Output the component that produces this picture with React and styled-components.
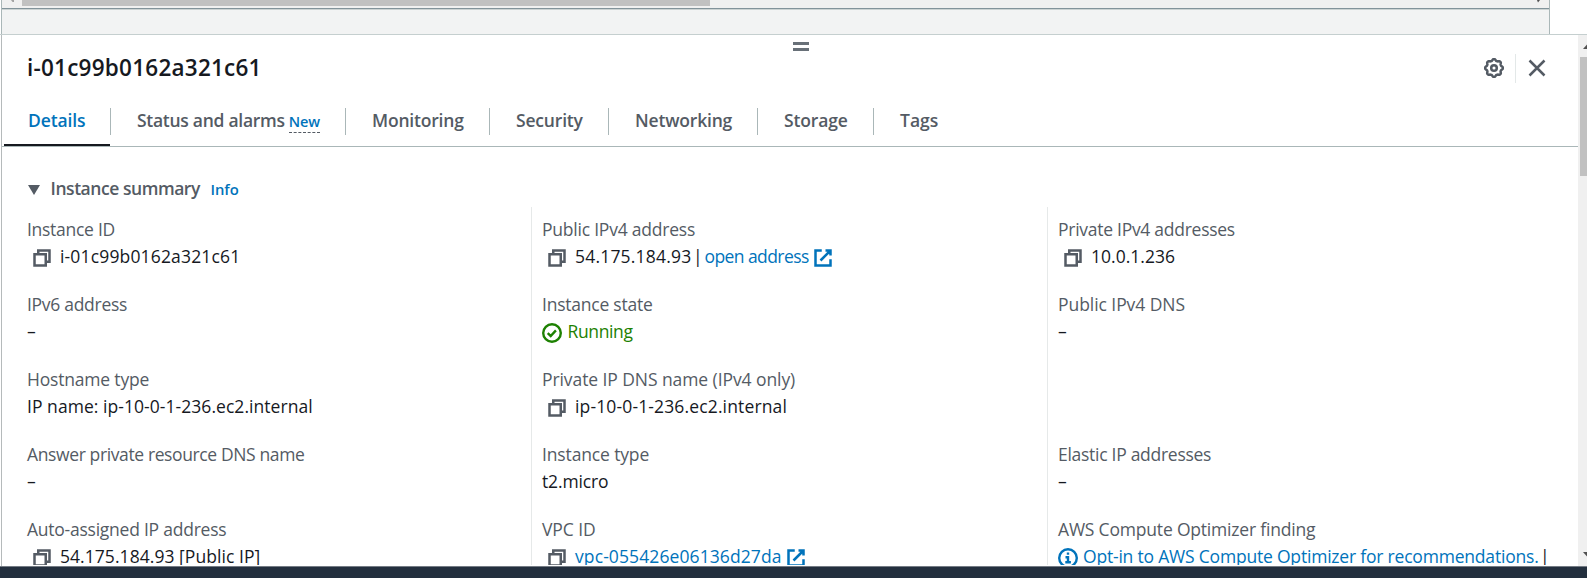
import React from 'react';
import styled, { createGlobalStyle } from 'styled-components';

const GlobalStyle = createGlobalStyle`
  * { box-sizing: border-box; }
  body {
    margin: 0;
    overflow: hidden;
    background: #fff;
    color: #16191f;
    font-family: "Open Sans", "Noto Sans", sans-serif;
    font-size: 17.5px;
  }
`;

const Page = styled.div`
  display: flex;
  flex-direction: column;
  width: 100%;
  height: 578px;
  overflow: hidden;
`;

const TableTail = styled.div`
  flex: none;
  width: 1550px;
  height: 34px;
  padding-left: 1px;
`;

const TableFrame = styled.div`
  height: 34px;
  background: #f2f3f3;
  border: solid #aab7b8;
  border-width: 0 1px;
`;

const HorizontalScrollbar = styled.div`
  display: flex;
  height: 10px;
  background: #f0f0f0;
  border-bottom: 1px solid #ccd3d3;
  box-shadow: inset 0 -1px 0 #82939a;
`;

const HorizontalThumb = styled.div`
  width: 688px;
  height: 6px;
  margin-left: 7px;
  background: #c1c1c1;
`;

const ScrollTip = styled.svg`
  flex: none;
  display: block;
  width: 4px;
  height: 3px;
  margin: ${(p) => (p.$end ? '0 8px 0 auto' : '0 0 0 9px')};
`;

const SplitPanel = styled.section`
  display: flex;
  flex: none;
  height: 532px;
  padding-left: 1px;
  border-top: 1px solid #c5cfcf;
`;

const PanelMain = styled.div`
  display: flex;
  flex-direction: column;
  width: 1577px;
  height: 531px;
  border-left: 1px solid #b5babb;
  overflow: hidden;
`;

const Handle = styled.div`
  display: flex;
  flex-direction: column;
  justify-content: space-between;
  width: 16px;
  height: 9px;
  margin: 7px 0 0 791px;

  &::before,
  &::after {
    content: "";
    height: 3px;
    background: #687078;
  }
`;

const PanelHeader = styled.header`
  display: flex;
  align-items: center;
  height: 34px;
  padding: 0 31px 0 25px;
`;

const Title = styled.h2`
  flex: 1;
  margin: 0;
  font-size: 22.5px;
  font-weight: 600;
  line-height: 32px;
  letter-spacing: 0.24px;
`;

const HeaderButton = styled.button`
  display: flex;
  padding: 0;
  border: 0;
  background: none;
  color: #545b64;
`;

const HeaderDivider = styled.span`
  width: 1px;
  height: 29px;
  margin: 0 11px;
  background: #e3e8e8;
`;

const TabList = styled.nav`
  display: flex;
  flex: none;
  height: 62px;
  padding: 23px 0 0 2px;
  border-bottom: 1px solid #aab7b8;
`;

const Tab = styled.a`
  position: relative;
  display: flex;
  align-items: baseline;
  width: ${(p) => p.$width}px;
  height: 27px;
  padding-left: ${(p) => (p.$active ? 24 : 26)}px;
  border-right: ${(p) => (p.$last ? 'none' : '1px solid #aab7b8')};
  color: ${(p) => (p.$active ? '#0073bb' : '#545b64')};
  font-weight: 600;
  line-height: 25px;
  white-space: nowrap;

  &::after {
    content: "";
    position: absolute;
    left: 0;
    right: 0;
    bottom: -11px;
    height: 2px;
    background: ${(p) => (p.$active ? '#16191f' : 'transparent')};
  }
`;

const NewBadge = styled.span`
  margin-left: 4px;
  border-bottom: 1px dashed #545b64;
  color: #0073bb;
  font-size: 14.5px;
  line-height: 20px;
  letter-spacing: -0.1px;
`;

const SectionHeader = styled.div`
  display: flex;
  align-items: baseline;
  height: 60px;
  padding: 28px 0 0 26px;
  color: #545b64;
  font-weight: 600;
  line-height: 27px;
`;

const Caret = styled.svg`
  width: 12px;
  height: 10px;
  margin-right: 10.5px;
`;

const InfoLink = styled.a`
  margin-left: 10.5px;
  color: #0073bb;
  font-size: 14.8px;
`;

const SummaryGrid = styled.div`
  display: grid;
  grid-template-columns: 504px 516px 520px;
  height: 358px;
  padding-left: 25px;
  overflow: hidden;
`;

const Column = styled.div`
  display: grid;
  grid-auto-rows: 54px;
  row-gap: 21px;
  height: 380px;
  padding: 9px 0 0 ${(p) => (p.$first ? 0 : 10)}px;
  border-left: ${(p) => (p.$first ? 'none' : '1px solid #e6e9e9')};
`;

const Field = styled.div`
  line-height: 27px;
  white-space: nowrap;
`;

const Label = styled.div`
  height: 27px;
  color: #545b64;
`;

const Value = styled.div`
  display: flex;
  height: 27px;
`;

const Text = styled.span`
  letter-spacing: ${(p) => p.$tracking || 0}px;
`;

const Link = styled.a`
  color: #0073bb;
`;

const Status = styled.span`
  color: #1d8102;
`;

const Pipe = styled.span`
  width: 13px;
  padding-left: 1.5px;
`;

const Icon = styled.svg`
  flex: none;
  display: block;
  width: 20px;
  height: 20px;
  margin: ${(p) => p.$margin || '0'};
  fill: none;
  stroke: currentColor;
  stroke-width: ${(p) => p.$stroke || 2};
`;

const CopyTone = styled.span`
  display: flex;
  color: #545b64;
`;

const VerticalScrollbar = styled.div`
  display: flex;
  flex-direction: column;
  flex: 1;
  height: 531px;
  background: #f0f0f0;
  overflow: hidden;
`;

const VerticalThumb = styled.div`
  height: 119px;
  margin-left: 2px;
  background: #c1c1c1;
`;

const ScrollArrow = styled.svg`
  flex: none;
  width: 9px;
  height: 5px;
  margin: ${(p) => (p.$down ? 'auto 0 9px 5px' : '9px 0 8px 5px')};
`;

const Footer = styled.footer`
  flex: 1;
  background: #232f3e;
  border-top: 1px solid #747b84;
`;

const CopyIcon = () => (
  <CopyTone>
    <Icon viewBox="0 0 16 16" $margin="5px 8px 0 5px">
      <path d="M2 5h9v9H2z" />
      <path d="M5 5V2h9v9h-3" />
    </Icon>
  </CopyTone>
);

const ExternalIcon = () => (
  <Icon viewBox="0 0 16 16" $margin="5px 0 0 4px">
    <path d="M10 2h4v4M6 10l8-8M14 9.05V14H2V2h5" />
  </Icon>
);

const CheckIcon = () => (
  <Icon viewBox="0 0 20 20" $margin="5px 5.5px 0 0" $stroke={2.4}>
    <circle cx="10" cy="10" r="8.8" />
    <path d="M5.7 10.2l3 2.8 5.2-5.6" />
  </Icon>
);

const InfoIcon = () => (
  <Icon viewBox="0 0 20 20" $margin="5px 5px 0 0" $stroke={2.4}>
    <circle cx="10" cy="10" r="8.8" />
    <path d="M10 4.600v2.200M7.500 9.300H10V14M7.300 14.200h5.600" />
  </Icon>
);

const gearPath = () => {
  const points = [];
  for (let i = 0; i < 96; i += 1) {
    const angle = (i / 96) * Math.PI * 2;
    const wave = Math.max(-0.7, Math.min(0.7, Math.cos(8 * angle))) / 0.7;
    const radius = 8.1 + wave * 0.7;
    points.push(`${(10 + radius * Math.sin(angle)).toFixed(2)} ${(10 - radius * Math.cos(angle)).toFixed(2)}`);
  }
  return `M${points.join('L')}Z`;
};

const GearIcon = () => (
  <Icon viewBox="0 0 20 20" $stroke={2.5}>
    <path d={gearPath()} strokeLinejoin="round" />
    <circle cx="10" cy="10" r="2.8" />
  </Icon>
);

const CloseIcon = () => (
  <Icon viewBox="0 0 20 20" $stroke={2.5}>
    <path d="M2.5 2.5l15 15M17.5 2.5l-15 15" />
  </Icon>
);

const tabs = [
  { name: 'Details', width: 107, tracking: -0.12, active: true },
  { name: 'Status and alarms', width: 235, tracking: -0.28, badge: 'New' },
  { name: 'Monitoring', width: 144, tracking: -0.2 },
  { name: 'Security', width: 119, tracking: -0.18 },
  { name: 'Networking', width: 149, tracking: -0.18 },
  { name: 'Storage', width: 116, tracking: -0.15 },
  { name: 'Tags', width: 100, tracking: 0.02 },
];

const columns = [
  [
    { label: 'Instance ID', tracking: -0.28, value: 'i-01c99b0162a321c61', valueTracking: 0.16, copy: true },
    { label: 'IPv6 address', tracking: -0.29, value: '–' },
    { label: 'Hostname type', tracking: -0.19, value: 'IP name: ip-10-0-1-236.ec2.internal', valueTracking: 0.05 },
    { label: 'Answer private resource DNS name', tracking: -0.38, value: '–' },
    { label: 'Auto-assigned IP address', tracking: -0.24, value: '54.175.184.93 [Public IP]', valueTracking: 0.05, copy: true },
  ],
  [
    { label: 'Public IPv4 address', tracking: -0.22, value: '54.175.184.93', valueTracking: 0.2, copy: true, link: 'open address', linkTracking: -0.57 },
    { label: 'Instance state', tracking: -0.23, status: 'Running', valueTracking: -0.36 },
    { label: 'Private IP DNS name (IPv4 only)', tracking: -0.08, value: 'ip-10-0-1-236.ec2.internal', valueTracking: 0.14, copy: true },
    { label: 'Instance type', tracking: -0.14, value: 't2.micro', valueTracking: -0.15 },
    { label: 'VPC ID', tracking: -0.08, link: 'vpc-055426e06136d27da', linkTracking: 0.1, copy: true },
  ],
  [
    { label: 'Private IPv4 addresses', tracking: -0.27, value: '10.0.1.236', valueTracking: 0.02, copy: true },
    { label: 'Public IPv4 DNS', tracking: -0.06, value: '–' },
    null,
    { label: 'Elastic IP addresses', tracking: -0.28, value: '–' },
    { label: 'AWS Compute Optimizer finding', tracking: -0.19, notice: 'Opt-in to AWS Compute Optimizer for recommendations.', valueTracking: -0.2 },
  ],
];

function FieldItem({ field }) {
  if (!field) return <Field />;
  return (
    <Field>
      <Label>
        <Text $tracking={field.tracking}>{field.label}</Text>
      </Label>
      <Value>
        {field.copy && <CopyIcon />}
        {field.value && <Text $tracking={field.valueTracking}>{field.value}</Text>}
        {field.value && field.link && <Pipe>|</Pipe>}
        {field.link && (
          <Value as={Link}>
            <Text $tracking={field.linkTracking}>{field.link}</Text>
            <ExternalIcon />
          </Value>
        )}
        {field.status && (
          <Value as={Status}>
            <CheckIcon />
            <Text $tracking={field.valueTracking}>{field.status}</Text>
          </Value>
        )}
        {field.notice && (
          <>
            <Value as={Link}>
              <InfoIcon />
              <Text $tracking={field.valueTracking}>{field.notice}</Text>
            </Value>
            <Pipe>|</Pipe>
          </>
        )}
      </Value>
    </Field>
  );
}

export default function App() {
  return (
    <Page>
      <GlobalStyle />
      <TableTail>
        <TableFrame>
          <HorizontalScrollbar>
            <ScrollTip viewBox="0 0 4 3">
              <path d="M0 0h3v2H1.500z" fill="#a3a3a3" />
            </ScrollTip>
            <HorizontalThumb />
            <ScrollTip viewBox="0 0 4 3" $end>
              <path d="M0 0h3L1 2.500z" fill="#505050" />
            </ScrollTip>
          </HorizontalScrollbar>
        </TableFrame>
      </TableTail>
      <SplitPanel>
        <PanelMain>
          <Handle />
          <PanelHeader>
            <Title>i-01c99b0162a321c61</Title>
            <HeaderButton aria-label="Preferences">
              <GearIcon />
            </HeaderButton>
            <HeaderDivider />
            <HeaderButton aria-label="Close">
              <CloseIcon />
            </HeaderButton>
          </PanelHeader>
          <TabList>
            {tabs.map((tab, i) => (
              <Tab key={tab.name} $width={tab.width} $active={tab.active} $last={i === tabs.length - 1}>
                <Text $tracking={tab.tracking}>{tab.name}</Text>
                {tab.badge && <NewBadge>{tab.badge}</NewBadge>}
              </Tab>
            ))}
          </TabList>
          <SectionHeader>
            <Caret viewBox="0 0 12 10">
              <path d="M0 0h12L6 10z" fill="#545b64" />
            </Caret>
            <Text $tracking={-0.45}>Instance summary</Text>
            <InfoLink>Info</InfoLink>
          </SectionHeader>
          <SummaryGrid>
            {columns.map((fields, c) => (
              <Column key={c} $first={c === 0}>
                {fields.map((field, r) => (
                  <FieldItem key={r} field={field} />
                ))}
              </Column>
            ))}
          </SummaryGrid>
        </PanelMain>
        <VerticalScrollbar>
          <ScrollArrow viewBox="0 0 9 5">
            <path d="M0 5L4.500 0 9 5z" fill="#505050" />
          </ScrollArrow>
          <VerticalThumb />
          <ScrollArrow viewBox="0 0 9 5" $down>
            <path d="M0 0h9L4.500 5z" fill="#505050" />
          </ScrollArrow>
        </VerticalScrollbar>
      </SplitPanel>
      <Footer />
    </Page>
  );
}
